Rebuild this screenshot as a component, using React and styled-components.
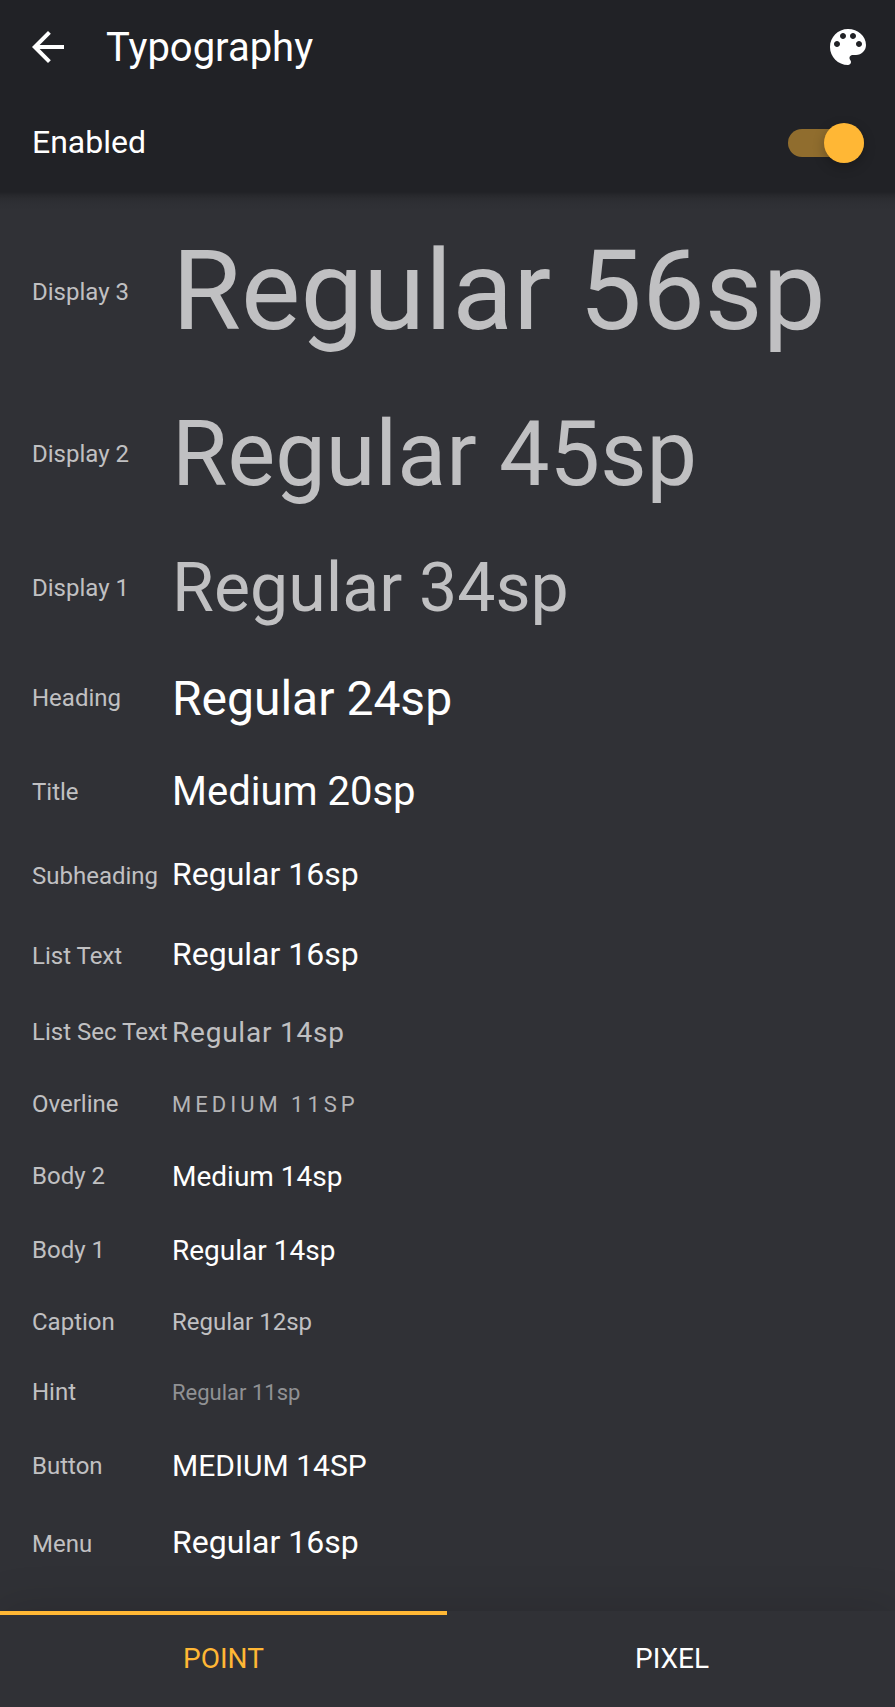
import React, { useState } from "react";
import styled, { createGlobalStyle } from "styled-components";
import { MdArrowBack } from "react-icons/md";

const GlobalStyle = createGlobalStyle`
  * { box-sizing: border-box; }
  body { margin: 0; background: #303136; }
`;

const Screen = styled.div`
  display: flex;
  flex-direction: column;
  width: 895px;
  height: 1707px;
  overflow: hidden;
  background: #303136;
  color: #fff;
  font-family: Roboto, sans-serif;
  white-space: nowrap;
`;

const Header = styled.header`
  height: 192px;
  background: #212226;
`;

const HeaderShade = styled.div`
  height: 18px;
  background: linear-gradient(#212226, #27282c 3px, #2c2d31 7px, #2e2f34 11px, #303136);
`;

const AppBar = styled.div`
  display: flex;
  align-items: center;
  height: 94px;
  padding: 0 23px 0 24px;
`;

const IconButton = styled.button`
  display: flex;
  padding: 0;
  border: 0;
  background: none;
  color: #fff;
  font-size: 48px;
`;

const PageTitle = styled.h1`
  flex: 1;
  margin: 0 0 0 34px;
  font-size: 40px;
  font-weight: 400;
`;

const SettingRow = styled.div`
  display: flex;
  align-items: center;
  justify-content: space-between;
  height: 98px;
  padding: 0 31px 0 32px;
  font-size: 32px;
`;

const SettingName = styled.span`
  padding-bottom: 2px;
`;

const Switch = styled.button`
  display: flex;
  align-items: center;
  justify-content: flex-end;
  width: 76px;
  height: 28px;
  padding: 0;
  border: 0;
  border-radius: 14px;
  background: #906d2e;
`;

const Thumb = styled.span`
  width: 40px;
  height: 40px;
  border-radius: 50%;
  background: #ffb735;
  box-shadow: 0 4px 12px rgba(0, 0, 0, 0.25);
`;

const List = styled.main`
  flex: 1;
  padding: 0 0 0 32px;
  margin-top: -6px;
`;

const Row = styled.div`
  display: flex;
  align-items: center;
  height: ${(p) => p.$height}px;
`;

const Label = styled.span`
  width: 140px;
  font-size: 24px;
  color: #c0c0c2;
`;

const Sample = styled.span`
  padding-bottom: ${(p) => p.$lift || 0}px;
  font-size: ${(p) => p.$size}px;
  color: ${(p) => p.$color || "#fff"};
  letter-spacing: ${(p) => p.$spacing || 0}px;
`;

const Tabs = styled.nav`
  display: flex;
  height: 96px;
  background: #303136;
  box-shadow: 0 0 48px rgba(0, 0, 0, 0.15);
`;

const Tab = styled.button`
  flex: ${(p) => (p.$active ? "0 0 447px" : "1")};
  padding: 0 0 6px ${(p) => (p.$active ? 0 : 2)}px;
  border: 0;
  border-top: 4px solid ${(p) => (p.$active ? "#ffb735" : "transparent")};
  background: none;
  color: ${(p) => (p.$active ? "#ffb735" : "#fff")};
  font: 400 28px Roboto, sans-serif;
`;

const GREY = "#c0c0c2";

const styles = [
  { label: "Display 3", text: "Regular 56sp", size: 112, height: 176, color: GREY, lift: 3 },
  { label: "Display 2", text: "Regular 45sp", size: 90, height: 148, color: GREY },
  { label: "Display 1", text: "Regular 34sp", size: 68, height: 120, color: GREY },
  { label: "Heading", text: "Regular 24sp", size: 48, height: 100 },
  { label: "Title", text: "Medium 20sp", size: 40, height: 88, lift: 1 },
  { label: "Subheading", text: "Regular 16sp", size: 32, height: 80, lift: 4 },
  { label: "List Text", text: "Regular 16sp", size: 32, height: 80, lift: 4 },
  { label: "List Sec Text", text: "Regular 14sp", size: 28, height: 72, color: GREY, spacing: 0.77 },
  { label: "Overline", text: "MEDIUM 11SP", size: 22, height: 72, color: "#b4b4b6", spacing: 4 },
  { label: "Body 2", text: "Medium 14sp", size: 28, height: 72 },
  { label: "Body 1", text: "Regular 14sp", size: 28, height: 76 },
  { label: "Caption", text: "Regular 12sp", size: 24, height: 68, color: GREY },
  { label: "Hint", text: "Regular 11sp", size: 22, height: 72, color: "#909194" },
  { label: "Button", text: "MEDIUM 14SP", size: 30, height: 76, lift: 2 },
  { label: "Menu", text: "Regular 16sp", size: 32, height: 80, lift: 4 },
];

function PaletteIcon() {
  return (
    <svg width="48" height="48" viewBox="0 0 24 24" fill="currentColor">
      <path d="M12 3c-4.97 0-9 4.03-9 9s4.03 9 9 9c.83 0 1.5-.67 1.5-1.5 0-.39-.15-.74-.39-1.01-.23-.26-.38-.61-.38-.99 0-.83.67-1.5 1.5-1.5H16c2.76 0 5-2.24 5-5 0-4.42-4.03-8-9-8zm-5.5 9c-.83 0-1.5-.67-1.5-1.5S5.67 9 6.5 9 8 9.67 8 10.5 7.33 12 6.5 12zm3-4C8.67 8 8 7.33 8 6.5S8.67 5 9.5 5s1.5.67 1.5 1.5S10.33 8 9.5 8zm5 0c-.83 0-1.5-.67-1.5-1.5S13.67 5 14.5 5s1.5.67 1.5 1.5S15.33 8 14.5 8zm3 4c-.83 0-1.5-.67-1.5-1.5S16.67 9 17.5 9s1.5.67 1.5 1.5-.67 1.5-1.5 1.5z" />
    </svg>
  );
}

export default function App() {
  const [tab, setTab] = useState("POINT");
  return (
    <Screen>
      <GlobalStyle />
      <Header>
        <AppBar>
          <IconButton aria-label="Back"><MdArrowBack /></IconButton>
          <PageTitle>Typography</PageTitle>
          <IconButton aria-label="Theme"><PaletteIcon /></IconButton>
        </AppBar>
        <SettingRow>
          <SettingName>Enabled</SettingName>
          <Switch role="switch" aria-checked="true" aria-label="Enabled"><Thumb /></Switch>
        </SettingRow>
      </Header>
      <HeaderShade />
      <List>
        {styles.map((s) => (
          <Row key={s.label} $height={s.height}>
            <Label>{s.label}</Label>
            <Sample $size={s.size} $color={s.color} $spacing={s.spacing} $lift={s.lift}>{s.text}</Sample>
          </Row>
        ))}
      </List>
      <Tabs>
        {["POINT", "PIXEL"].map((t) => (
          <Tab key={t} $active={tab === t} onClick={() => setTab(t)}>{t}</Tab>
        ))}
      </Tabs>
    </Screen>
  );
}
